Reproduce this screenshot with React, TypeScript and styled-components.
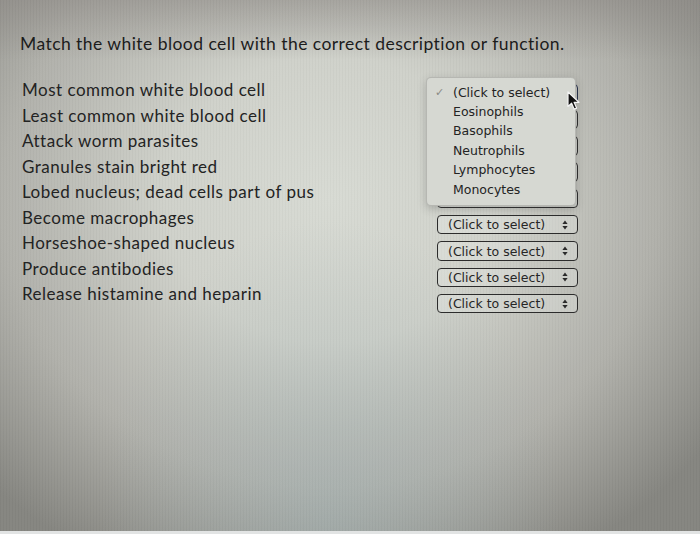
import React from "react";
import styled, { createGlobalStyle } from "styled-components";

const GlobalStyle = createGlobalStyle`
  html, body {
    margin: 0;
    padding: 0;
    width: 700px;
    height: 534px;
    overflow: hidden;
  }
  body {
    font-family: "Lato", "Open Sans", sans-serif;
    color: #1f1f1f;
  }
`;

const Screen = styled.div`
  position: relative;
  width: 700px;
  height: 534px;
  box-sizing: border-box;
  overflow: hidden;
  background:
    linear-gradient(to bottom, rgba(230, 232, 232, 0) 531px, #e2e4e4 531px),
    repeating-linear-gradient(90deg, rgba(0, 0, 0, 0.018) 0 1px, rgba(255, 255, 255, 0.018) 1px 3px),
    linear-gradient(to bottom, rgba(140, 136, 132, 0.55) 0px, rgba(140, 136, 132, 0) 60px),
    radial-gradient(ellipse 230px 300px at 330px 520px, rgba(160, 178, 180, 0.45), rgba(160, 178, 180, 0) 100%),
    radial-gradient(ellipse 470px 410px at 330px 200px, #d7dad3 0%, #cfd1ca 35%, #b0b0aa 70%, #858580 100%),
    #767672;
`;

const Page = styled.div`
  display: flex;
  flex-direction: column;
  padding: 33px 0 0 20px;
`;

const Heading = styled.h1`
  margin: 0;
  font-size: 17.5px;
  font-weight: 400;
  line-height: 22px;
  letter-spacing: 0.45px;
  color: #1c1c1c;
`;

const Matches = styled.div`
  display: grid;
  grid-template-columns: 415px 141px;
  align-items: start;
  margin-top: 22px;
  padding-left: 2px;
`;

const Prompts = styled.div`
  display: flex;
  flex-direction: column;
`;

const Label = styled.div`
  height: 25.5px;
  display: flex;
  align-items: center;
  font-size: 17px;
  letter-spacing: 0.5px;
  color: #232323;
  white-space: nowrap;
`;

const Answers = styled.div`
  display: flex;
  flex-direction: column;
  gap: 6.8px;
  padding-top: 6.5px;
`;

const Cell = styled.div`
  position: relative;
`;

const Select = styled.div<{ $open?: boolean }>`
  display: flex;
  align-items: center;
  justify-content: space-between;
  box-sizing: border-box;
  width: 141px;
  height: 19.5px;
  padding: 0 9px 0 10px;
  border: 1.5px solid ${(p) => (p.$open ? "#26314c" : "#2c2c2c")};
  border-radius: 4px;
  background: rgba(236, 238, 234, 0.3);
  font-family: "DejaVu Sans", "Liberation Sans", sans-serif;
  font-size: 12.5px;
  color: #262626;
`;

const Stepper = styled.svg`
  width: 6px;
  height: 10px;
  flex: none;
`;

const Menu = styled.ul`
  position: absolute;
  left: -11px;
  top: -7px;
  z-index: 2;
  box-sizing: border-box;
  width: 150px;
  margin: 0;
  padding: 5px 0 6px;
  list-style: none;
  background: #d6d8d2;
  border: 1px solid rgba(150, 150, 146, 0.5);
  border-radius: 5px;
  box-shadow: 0 3px 8px rgba(60, 60, 60, 0.28);
`;

const Option = styled.li`
  display: flex;
  align-items: center;
  height: 19.4px;
  padding-left: 8px;
  font-family: "DejaVu Sans", "Liberation Sans", sans-serif;
  font-size: 12.5px;
  color: #232323;
`;

const Check = styled.span<{ $on?: boolean }>`
  width: 18px;
  flex: none;
  font-size: 11px;
  color: #8a8a86;
  visibility: ${(p) => (p.$on ? "visible" : "hidden")};
`;

const Pointer = styled.svg`
  position: absolute;
  left: 130px;
  top: 7px;
  z-index: 3;
  width: 14px;
  height: 20px;
`;

const prompts = [
  "Most common white blood cell",
  "Least common white blood cell",
  "Attack worm parasites",
  "Granules stain bright red",
  "Lobed nucleus; dead cells part of pus",
  "Become macrophages",
  "Horseshoe-shaped nucleus",
  "Produce antibodies",
  "Release histamine and heparin",
];

const cells = ["Eosinophils", "Basophils", "Neutrophils", "Lymphocytes", "Monocytes"];

const Arrows = () => (
  <Stepper viewBox="0 0 6 10">
    <path d="M3 0.5 L5.6 4 H0.4 Z" fill="#2a2a2a" />
    <path d="M3 9.5 L5.6 6 H0.4 Z" fill="#2a2a2a" />
  </Stepper>
);

export default function App() {
  return (
    <Screen>
      <GlobalStyle />
      <Page>
        <Heading>Match the white blood cell with the correct description or function.</Heading>
        <Matches>
          <Prompts>
            {prompts.map((text) => (
              <Label key={text}>{text}</Label>
            ))}
          </Prompts>
          <Answers>
            {prompts.map((text, i) => (
              <Cell key={text}>
                <Select $open={i === 0}>
                  <span>(Click to select)</span>
                  <Arrows />
                </Select>
                {i === 0 && (
                  <>
                    <Menu>
                      <Option>
                        <Check $on>✓</Check>(Click to select)
                      </Option>
                      {cells.map((c) => (
                        <Option key={c}>
                          <Check />
                          {c}
                        </Option>
                      ))}
                    </Menu>
                    <Pointer viewBox="0 0 14 20">
                      <path
                        d="M1 1 L1 15.5 L4.6 12.2 L7.2 18.2 L9.6 17.1 L7.1 11.3 L12 11.3 Z"
                        fill="#111"
                        stroke="#f4f4f4"
                        strokeWidth="1.2"
                        strokeLinejoin="round"
                      />
                    </Pointer>
                  </>
                )}
              </Cell>
            ))}
          </Answers>
        </Matches>
      </Page>
    </Screen>
  );
}
